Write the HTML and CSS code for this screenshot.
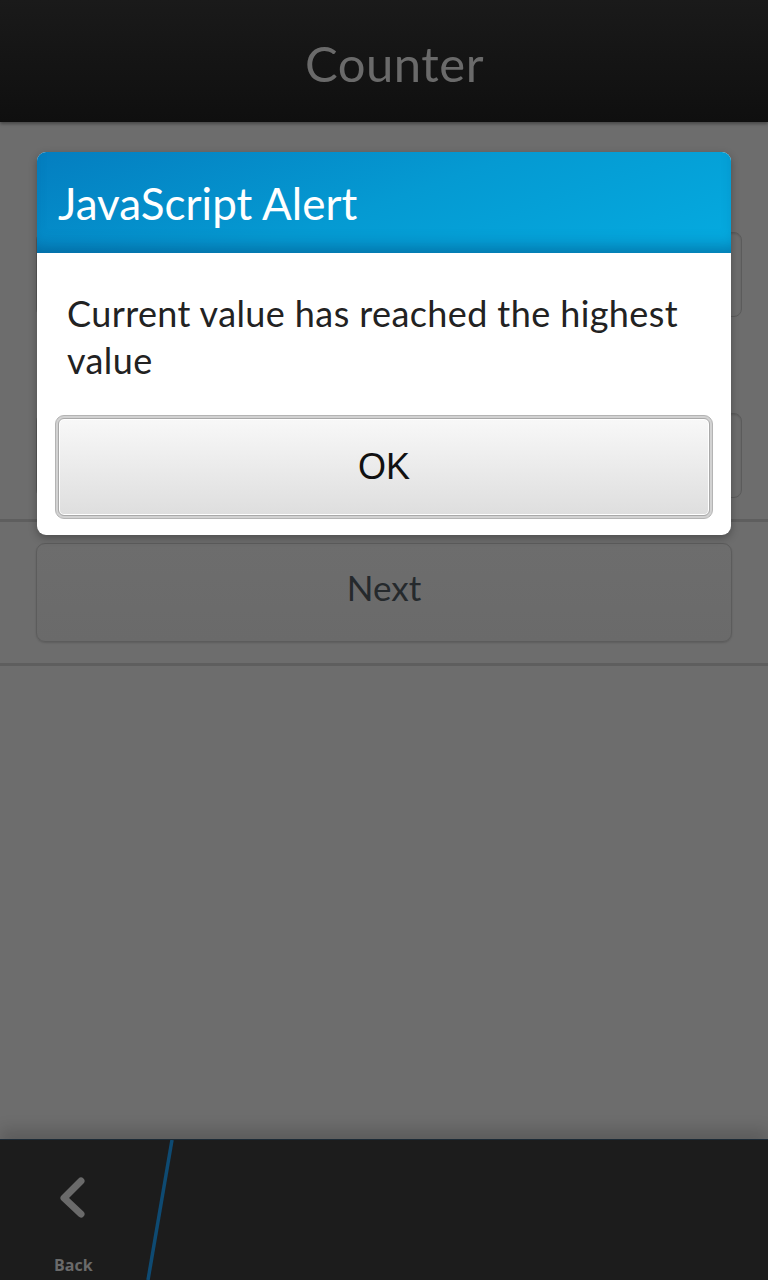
FILE: index.html
```html
<!DOCTYPE html>
<html>
<head>
<meta charset="utf-8">
<link rel="stylesheet" href="styles.css">
</head>
<body>
<div class="screen">
  <header class="titlebar"><h1 class="title">Counter</h1></header>
  <main class="content">
    <div class="spacer-top"></div>
    <div class="field"></div>
    <div class="field field-2"></div>
    <div class="divider"></div>
    <div class="next-wrap"><div class="next">Next</div></div>
    <div class="divider"></div>
  </main>
  <footer class="actionbar">
    <div class="back">
      <svg class="chev" width="40" height="50" viewBox="0 0 40 50"><path d="M30 11 L13 28 L30 44" fill="none" stroke="#6a6a6a" stroke-width="7" stroke-linecap="round" stroke-linejoin="round"/></svg>
      <span class="back-label">Back</span>
    </div>
    <svg class="slant" width="30" height="140" viewBox="0 0 30 140"><line x1="26" y1="0" x2="2" y2="140" stroke="#0e4a72" stroke-width="3.5"/></svg>
  </footer>

  <div class="dialog">
    <div class="dialog-head">JavaScript Alert</div>
    <div class="dialog-body">
      <p class="msg">Current value has reached the highest value</p>
      <div class="ok-ring"><button class="ok">OK</button></div>
    </div>
  </div>
</div>
</body>
</html>
```

FILE: styles.css
```css
html, body {
  margin: 0;
  padding: 0;
  background: #6d6d6d;
}
.screen {
  position: relative;
  width: 768px;
  height: 1280px;
  display: flex;
  flex-direction: column;
  font-family: Lato, "Open Sans", sans-serif;
  overflow: hidden;
}
.titlebar {
  height: 122px;
  flex: none;
  background: linear-gradient(#1a1a1a, #0f0f0f);
  display: flex;
  align-items: center;
  justify-content: center;
  box-shadow: 0 2px 3px rgba(0,0,0,0.35);
  position: relative;
  z-index: 1;
}
.title {
  margin: 0;
  font-weight: 400;
  font-size: 49px;
  letter-spacing: 0.5px;
  color: #6a6a6a;
  padding-top: 4px;
  padding-left: 21px;
}
.content {
  flex: 1;
  background: #6d6d6d;
  display: flex;
  flex-direction: column;
}
.spacer-top { height: 110px; }
.field {
  margin-left: 36px;
  width: 704px;
  height: 83px;
  border: 1px solid #5b5b5b;
  border-radius: 8px;
  box-shadow: inset 0 1px 2px rgba(0,0,0,0.15);
}
.field-2 { margin-top: 96px; }
.divider {
  height: 3px;
  background: #5e5e5e;
  margin-top: 21px;
}
.next-wrap { padding: 21px 36px 0 36px; }
.next {
  height: 85px;
  padding-bottom: 12px;
  box-sizing: content-box;
  border: 1px solid #5c5c5c;
  border-radius: 9px;
  background: linear-gradient(#6d6d6d, #6a6a6a);
  box-shadow: 0 1px 2px rgba(0,0,0,0.15);
  display: flex;
  align-items: center;
  justify-content: center;
  font-size: 35px;
  color: #25292c;
  width: 694px;
}
.actionbar {
  height: 140px;
  flex: none;
  background: #1c1c1c;
  display: flex;
  box-shadow: 0 -10px 14px rgba(0,0,0,0.15);
  position: relative;
  z-index: 1;
  border-top: 1px solid #1c2a36;
}
.back {
  width: 146px;
  display: flex;
  flex-direction: column;
  align-items: flex-start;
}
.chev {
  margin-left: 51px;
  margin-top: 30px;
}
.back-label {
  margin-top: 34px;
  margin-left: 54px;
  font-family: "Open Sans", sans-serif;
  font-weight: 700;
  font-size: 16px;
  color: #6a6a6a;
}
.slant { flex: none; }

.dialog {
  position: absolute;
  left: 37px;
  top: 152px;
  width: 694px;
  border-radius: 9px;
  overflow: hidden;
  background: #fff;
  box-shadow: 0 3px 8px rgba(0,0,0,0.3);
  z-index: 2;
}
.dialog-head {
  height: 101px;
  background: linear-gradient(160deg, #047ec0 0%, #059ad2 50%, #05abe0 100%);
  box-shadow: inset 0 -14px 16px -8px rgba(0,60,110,0.45);
  color: #fff;
  font-size: 44px;
  display: flex;
  align-items: center;
  padding-left: 21px;
  box-sizing: border-box;
}
.dialog-body {
  padding: 37px 18px 16px 18px;
}
.msg {
  margin: 0 0 31px 12px;
  font-size: 36px;
  letter-spacing: 0.4px;
  line-height: 47px;
  color: #222;
  padding-right: 10px;
}
.ok-ring {
  border: 1px solid #b4b4b4;
  background: #d2d2d2;
  padding: 2px;
  border-radius: 9px;
}
.ok {
  display: block;
  width: 100%;
  height: 98px;
  border: 1px solid #a9a9a9;
  border-radius: 6px;
  background: linear-gradient(#f8f8f8, #dedede);
  box-shadow: inset 0 0 0 1px #fff;
  font-family: "Liberation Sans", Arial, sans-serif;
  font-size: 36px;
  color: #111;
  padding: 0;
}
```
